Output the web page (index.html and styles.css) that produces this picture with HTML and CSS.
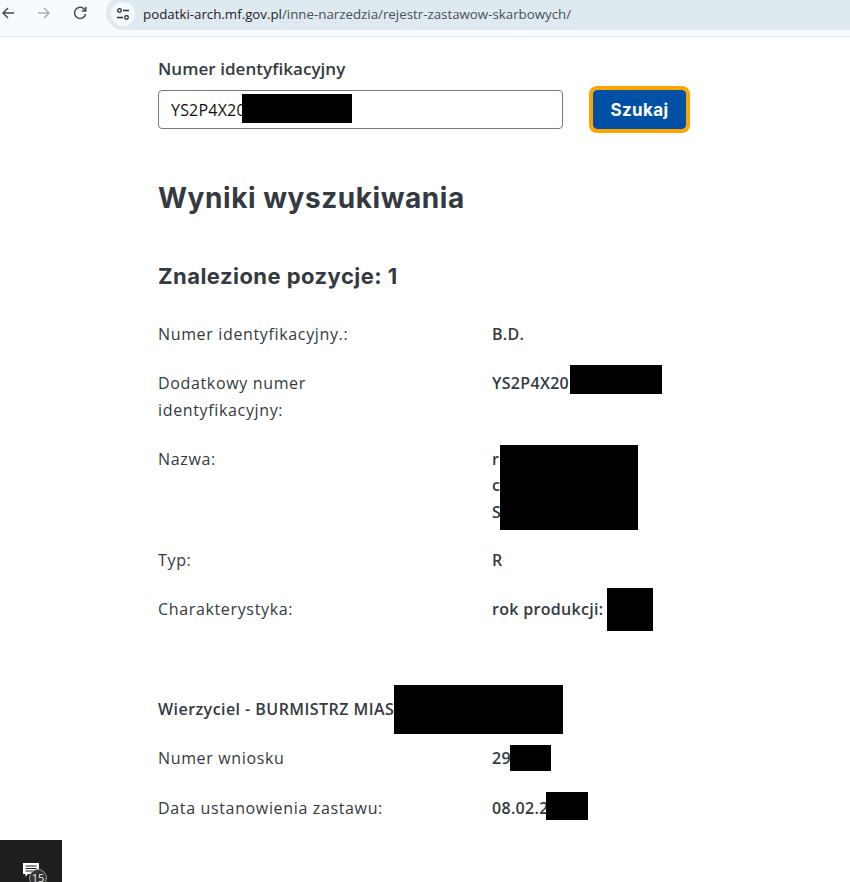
FILE: index.html
```html
<!DOCTYPE html>
<html lang="pl">

<head>
  <meta charset="UTF-8">
  <meta name="viewport" content="width=device-width, initial-scale=1.0">
  <title>Rejestr zastawów skarbowych</title>
  <link rel="stylesheet" href="styles.css">
</head>

<body>
  <div class="toolbar">
    <div class="nav-btn">
      <svg width="14" height="14" viewBox="0 0 14 14"><path d="M13 7H2M7 2L2 7l5 5" fill="none" stroke="#474c50" stroke-width="1.5"/></svg>
    </div>
    <div class="nav-btn">
      <svg width="14" height="14" viewBox="0 0 14 14"><path d="M1 7h11M7 2l5 5-5 5" fill="none" stroke="#a9adb1" stroke-width="1.5"/></svg>
    </div>
    <div class="nav-btn">
      <svg width="14" height="14" viewBox="0 0 14 14"><path d="M12.6 8A5.6 5.6 0 1 1 11 2.9L12.6 4.5M12.8 .8V4.9H8.7" fill="none" stroke="#474c50" stroke-width="1.5"/></svg>
    </div>
    <div class="omnibox">
      <span class="site-icon">
        <svg width="14" height="14" viewBox="0 0 14 14"><g fill="none" stroke="#2b2f33" stroke-width="1.3"><circle cx="3.5" cy="3.5" r="1.8"/><path d="M7 3.5h6M1 10.5h6"/><circle cx="10.5" cy="10.5" r="1.8"/></g></svg>
      </span>
      <span class="url"><span class="url-host">podatki-arch.mf.gov.pl</span>/inne-narzedzia/rejestr-zastawow-skarbowych/</span>
    </div>
  </div>

  <div class="container">
    <form class="search">
      <label class="search-label" for="numer">Numer identyfikacyjny</label>
      <div class="search-row">
        <div class="input-wrap">
          <input class="search-input" id="numer" type="text" value="YS2P4X20">
          <span class="redact redact-input"></span>
        </div>
        <button class="search-btn" type="button">Szukaj</button>
      </div>
    </form>

    <h1 class="results-title">Wyniki wyszukiwania</h1>
    <h2 class="results-count">Znalezione pozycje: 1</h2>

    <div class="row">
      <div class="key">Numer identyfikacyjny.:</div>
      <div class="val">B.D.</div>
    </div>
    <div class="row">
      <div class="key">Dodatkowy numer identyfikacyjny:</div>
      <div class="val">YS2P4X20<span class="redact redact-extra"></span></div>
    </div>
    <div class="row">
      <div class="key">Nazwa:</div>
      <div class="val val-name">r<br>c<br>S<span class="redact redact-name"></span></div>
    </div>
    <div class="row">
      <div class="key">Typ:</div>
      <div class="val">R</div>
    </div>
    <div class="row">
      <div class="key">Charakterystyka:</div>
      <div class="val">rok produkcji:<span class="redact redact-year"></span></div>
    </div>

    <h3 class="creditor">Wierzyciel - BURMISTRZ MIAS<span class="redact redact-creditor"></span></h3>

    <div class="row">
      <div class="key">Numer wniosku</div>
      <div class="val">29<span class="redact redact-app"></span></div>
    </div>
    <div class="row">
      <div class="key">Data ustanowienia zastawu:</div>
      <div class="val">08.02.2<span class="redact redact-date"></span></div>
    </div>
  </div>

  <div class="chat-tab">
    <svg width="16" height="14" viewBox="0 0 16 14"><path d="M0 0h16v11H5l-2.500 3v-3H0z" fill="#fff"/><path d="M2.500 3h11M2.500 5.500h11M2.500 8h8" stroke="#222" stroke-width="1.1"/></svg>
    <span class="chat-badge">15</span>
  </div>
</body>

</html>
```

FILE: styles.css
```css
html,body {
  box-sizing: border-box;
  margin: 0;
  height: 882px;
  overflow: hidden;
}

*,
*:before,
*:after {
  box-sizing: inherit;
}

body {
  position: relative;
  background-color: #fff;
  color: #343a40;
  font-family: "Open Sans", sans-serif;
  font-size: 16px;
}

.toolbar {
  display: flex;
  align-items: flex-start;
  height: 37px;
  padding-left: 1px;
  background-color: #f8fbfe;
  border-bottom: 1px solid #dfe8ef;
  overflow: hidden;
}

.nav-btn {
  display: flex;
  justify-content: center;
  width: 14px;
  height: 30px;
  padding-top: 6px;
  margin-right: 22px;
}

.omnibox {
  display: flex;
  align-items: center;
  flex: 1;
  height: 34px;
  margin-top: -4px;
  margin-left: -3px;
  padding-left: 5px;
  background-color: #dfe9f0;
  border-radius: 17px 0 0 17px;
}

.site-icon {
  display: flex;
  align-items: center;
  justify-content: center;
  width: 24px;
  height: 24px;
  margin-top: 1px;
  background-color: #f6fafd;
  border-radius: 50%;
}

.url {
  margin-left: 8px;
  margin-top: 2px;
  font-size: 13.3px;
  color: #4a5157;
  white-space: nowrap;
}
.url-host {
  color: #1f2225;
}

.container {
  width: 540px;
  margin-left: 158px;
  padding-top: 20px;
}

.search-label {
  display: block;
  font-size: 17px;
  font-weight: 600;
  letter-spacing: .05px;
  line-height: 24px;
}

.search-row {
  display: flex;
  align-items: flex-start;
  margin-top: 9px;
}

.input-wrap {
  position: relative;
  width: 405px;
}

.search-input {
  display: block;
  width: 100%;
  height: 39px;
  padding: 0 12px;
  font-family: "Open Sans", sans-serif;
  font-size: 16px;
  letter-spacing: .2px;
  color: #111;
  background-color: #fff;
  border: 1px solid #77797b;
  border-radius: 4px;
}

.search-btn {
  width: 93px;
  height: 39px;
  margin-left: 30px;
  background-color: #0051a5;
  color: #fff;
  font-family: "Inter", sans-serif;
  font-size: 17px;
  font-weight: 700;
  letter-spacing: .4px;
  border: none;
  border-radius: 4px;
  outline: 4px solid #ffa500;
  outline-offset: 0;
}

.results-title {
  margin: 49px 0 0;
  font-family: "Inter", sans-serif;
  font-size: 28px;
  font-weight: 700;
  letter-spacing: .55px;
  line-height: 40px;
  color: #343a40;
}

.results-count {
  margin: 42px 0 0;
  font-family: "Inter", sans-serif;
  font-size: 22px;
  font-weight: 700;
  letter-spacing: .45px;
  line-height: 32px;
}

.row {
  display: flex;
  margin-bottom: 22px;
  line-height: 27px;
}

.results-count + .row {
  margin-top: 29px;
}

.creditor + .row {
  margin-bottom: 23px;
}

.key {
  width: 334px;
  padding-right: 84px;
  letter-spacing: .65px;
}

.val {
  position: relative;
  font-weight: 600;
  letter-spacing: .3px;
}
.val-name {
  line-height: 26.33px;
}

.redact {
  position: absolute;
  background-color: #000;
}

.redact-input { left: 84px; top: 4px; width: 110px; height: 29px; }
.redact-extra { left: 78px; top: -5px; width: 92px; height: 29px; }
.redact-name { left: 8px; top: -1px; width: 138px; height: 85px; }
.redact-year { left: 115px; top: -8px; width: 46px; height: 43px; }
.redact-app { left: 18px; top: 0; width: 41px; height: 26px; }
.redact-date { left: 54px; top: -3px; width: 42px; height: 28px; }

.creditor {
  position: relative;
  margin: 73px 0 22px;
  font-size: 16px;
  font-weight: 600;
  letter-spacing: .45px;
  line-height: 27px;
}

.redact-creditor { left: 236px; top: -11px; width: 169px; height: 49px; }

.chat-tab {
  position: absolute;
  left: 0;
  bottom: 0;
  width: 62px;
  height: 42px;
  background-color: #1e1e1e;
}
.chat-tab svg {
  position: absolute;
  left: 23px;
  top: 23px;
}

.chat-badge {
  position: absolute;
  left: 29px;
  top: 29px;
  width: 18px;
  height: 18px;
  font-size: 11px;
  line-height: 16px;
  text-align: center;
  color: #eee;
  background-color: #333;
  border: 1px solid #999;
  border-radius: 50%;
}
```
